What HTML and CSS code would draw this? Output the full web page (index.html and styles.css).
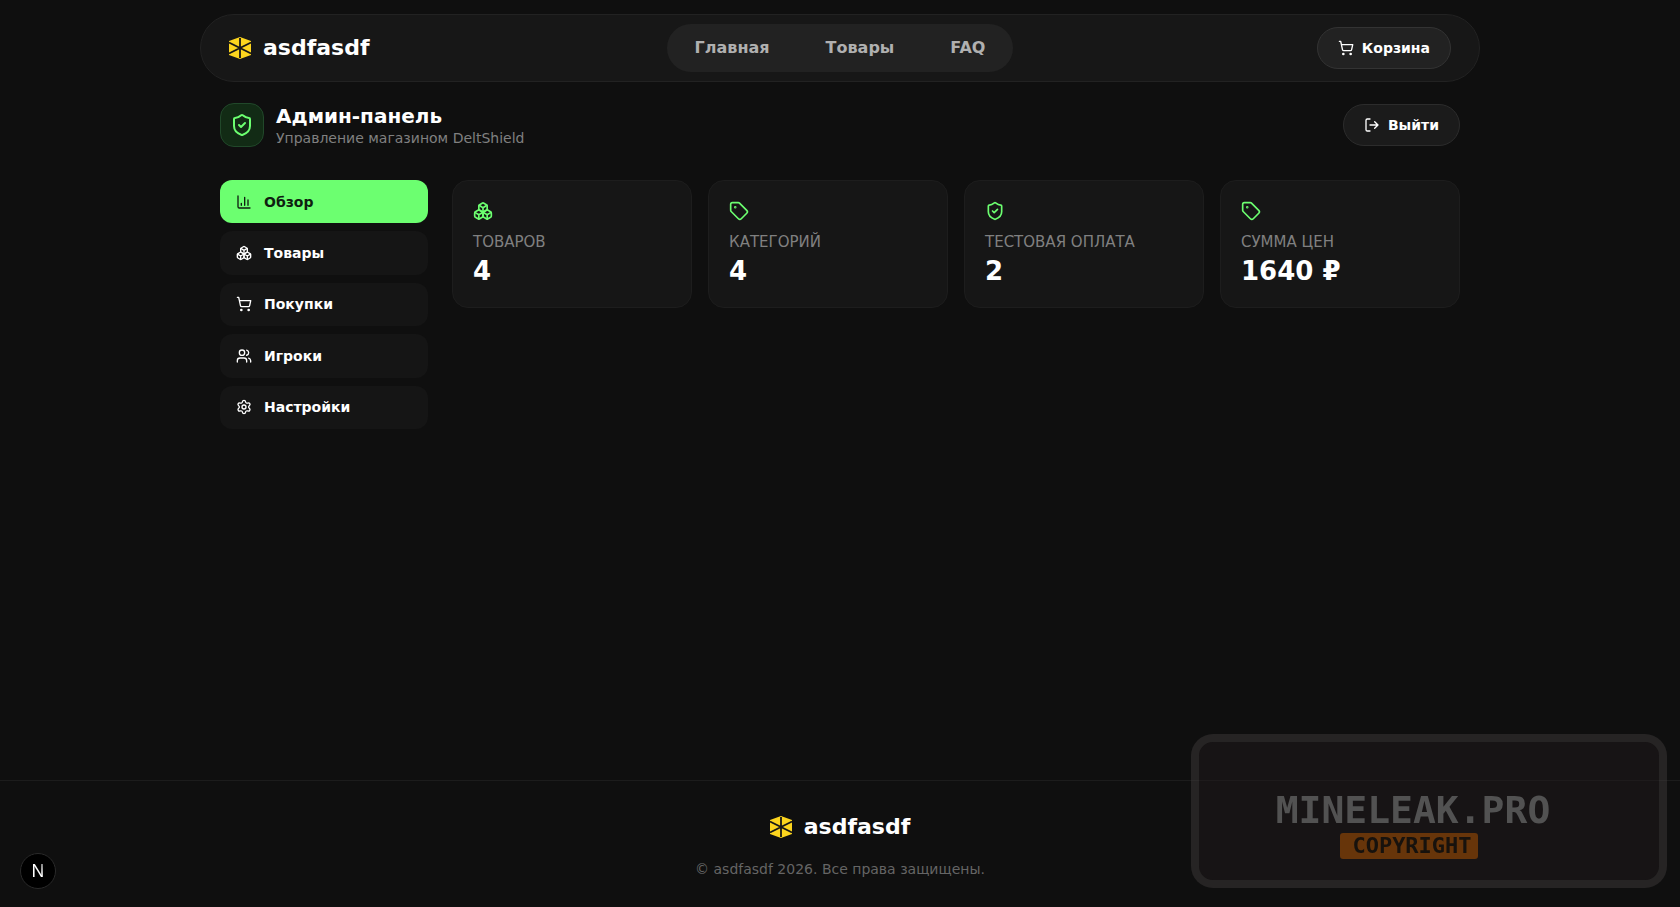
FILE: index.html
```html
<!DOCTYPE html>
<html lang="ru">
<head>
    <meta charset="UTF-8">
    <meta name="viewport" content="width=device-width, initial-scale=1.0">
    <title>asdfasdf</title>
    <link rel="stylesheet" href="styles.css">
</head>
<body>
    <!-- Shared icons -->
    <svg class="sprite" aria-hidden="true">
        <symbol id="icon-logo" viewBox="0 0 22 22">
            <path d="M11 0 22 4v14l-11 4-11-4V4z" fill="#fcd51e"/>
            <path d="M11 1v20M0 5.5l22 11M22 5.5l-22 11" stroke="#171717" stroke-width="1.8" fill="none"/>
        </symbol>
        <symbol id="icon-cart" viewBox="0 0 24 24">
            <circle cx="8" cy="21" r="1"/>
            <circle cx="19" cy="21" r="1"/>
            <path d="M2.05 2.05h2l2.66 12.42a2 2 0 0 0 2 1.58h9.78a2 2 0 0 0 1.95-1.57l1.65-7.43H5.12"/>
        </symbol>
        <symbol id="icon-shield" viewBox="0 0 24 24">
            <path d="M20 13c0 5-3.5 7.5-7.66 8.95a1 1 0 0 1-.67-.01C7.5 20.5 4 18 4 13V6a1 1 0 0 1 1-1c2 0 4.5-1.2 6.24-2.72a1.17 1.17 0 0 1 1.52 0C14.51 3.81 17 5 19 5a1 1 0 0 1 1 1z"/>
            <path d="m9 12 2 2 4-4"/>
        </symbol>
        <symbol id="icon-logout" viewBox="0 0 24 24">
            <path d="m16 17 5-5-5-5M21 12H9M9 21H5a2 2 0 0 1-2-2V5a2 2 0 0 1 2-2h4"/>
        </symbol>
        <symbol id="icon-chart" viewBox="0 0 24 24">
            <path d="M3 3v16a2 2 0 0 0 2 2h16M18 17V9M13 17V5M8 17v-3"/>
        </symbol>
        <symbol id="icon-boxes" viewBox="0 0 24 24">
            <path d="M2.97 12.92A2 2 0 0 0 2 14.63v3.24a2 2 0 0 0 .97 1.71l3 1.8a2 2 0 0 0 2.06 0L12 19v-5.5l-5-3-4.03 2.42Z"/>
            <path d="m7 16.5-4.74-2.85M7 16.5l5-3M7 16.5v5.17"/>
            <path d="M12 13.5V19l3.97 2.38a2 2 0 0 0 2.06 0l3-1.8a2 2 0 0 0 .97-1.71v-3.24a2 2 0 0 0-.97-1.71L17 10.5l-5 3Z"/>
            <path d="m17 16.5-5-3M17 16.5l4.74-2.85M17 16.5v5.17"/>
            <path d="M7.97 4.42A2 2 0 0 0 7 6.13v4.37l5 3 5-3V6.13a2 2 0 0 0-.97-1.71l-3-1.8a2 2 0 0 0-2.06 0l-3 1.8Z"/>
            <path d="M12 8 7.26 5.15M12 8l4.74-2.85M12 13.5V8"/>
        </symbol>
        <symbol id="icon-users" viewBox="0 0 24 24">
            <path d="M16 21v-2a4 4 0 0 0-4-4H6a4 4 0 0 0-4 4v2M16 3.13a4 4 0 0 1 0 7.75M22 21v-2a4 4 0 0 0-3-3.87"/>
            <circle cx="9" cy="7" r="4"/>
        </symbol>
        <symbol id="icon-settings" viewBox="0 0 24 24">
            <path d="M9.67 4.14a2.34 2.34 0 0 1 4.66 0 2.34 2.34 0 0 0 3.32 1.91 2.34 2.34 0 0 1 2.33 4.04 2.34 2.34 0 0 0 0 3.83 2.34 2.34 0 0 1-2.33 4.03 2.34 2.34 0 0 0-3.32 1.92 2.34 2.34 0 0 1-4.66 0 2.34 2.34 0 0 0-3.32-1.92 2.34 2.34 0 0 1-2.33-4.03 2.34 2.34 0 0 0 0-3.83 2.34 2.34 0 0 1 2.33-4.04 2.34 2.34 0 0 0 3.32-1.91"/>
            <circle cx="12" cy="12" r="3"/>
        </symbol>
        <symbol id="icon-tag" viewBox="0 0 24 24">
            <path d="M12.59 2.59A2 2 0 0 0 11.17 2H4a2 2 0 0 0-2 2v7.17a2 2 0 0 0 .59 1.42l8.7 8.7a2.43 2.43 0 0 0 3.42 0l6.58-6.58a2.43 2.43 0 0 0 0-3.42z"/>
            <circle cx="7.5" cy="7.5" r=".5" fill="currentColor"/>
        </symbol>
    </svg>

    <header class="header">
        <a href="#" class="logo">
            <svg class="logo-icon"><use href="#icon-logo"/></svg>
            <span>asdfasdf</span>
        </a>
        <nav class="nav">
            <a href="#">Главная</a>
            <a href="#">Товары</a>
            <a href="#">FAQ</a>
        </nav>
        <button type="button" class="btn btn-cart">
            <svg class="icon"><use href="#icon-cart"/></svg>
            Корзина
        </button>
    </header>

    <main class="admin">
        <div class="admin-head">
            <div class="admin-badge">
                <svg class="icon"><use href="#icon-shield"/></svg>
            </div>
            <div class="admin-title">
                <h1>Админ-панель</h1>
                <p>Управление магазином DeltShield</p>
            </div>
            <button type="button" class="btn">
                <svg class="icon"><use href="#icon-logout"/></svg>
                Выйти
            </button>
        </div>

        <div class="admin-body">
            <aside class="sidebar">
                <button type="button" class="tab active"><svg class="icon"><use href="#icon-chart"/></svg>Обзор</button>
                <button type="button" class="tab"><svg class="icon"><use href="#icon-boxes"/></svg>Товары</button>
                <button type="button" class="tab"><svg class="icon"><use href="#icon-cart"/></svg>Покупки</button>
                <button type="button" class="tab"><svg class="icon"><use href="#icon-users"/></svg>Игроки</button>
                <button type="button" class="tab"><svg class="icon"><use href="#icon-settings"/></svg>Настройки</button>
            </aside>

            <section class="stats">
                <div class="stat">
                    <svg class="icon"><use href="#icon-boxes"/></svg>
                    <div class="stat-label">Товаров</div>
                    <div class="stat-value">4</div>
                </div>
                <div class="stat">
                    <svg class="icon"><use href="#icon-tag"/></svg>
                    <div class="stat-label">Категорий</div>
                    <div class="stat-value">4</div>
                </div>
                <div class="stat">
                    <svg class="icon"><use href="#icon-shield"/></svg>
                    <div class="stat-label">Тестовая оплата</div>
                    <div class="stat-value">2</div>
                </div>
                <div class="stat">
                    <svg class="icon"><use href="#icon-tag"/></svg>
                    <div class="stat-label">Сумма цен</div>
                    <div class="stat-value">1640 ₽</div>
                </div>
            </section>
        </div>
    </main>

    <footer class="footer">
        <a href="#" class="logo">
            <svg class="logo-icon"><use href="#icon-logo"/></svg>
            <span>asdfasdf</span>
        </a>
        <p>© asdfasdf 2026. Все права защищены.</p>
    </footer>

    <button type="button" class="dev-button"><span>N</span></button>

    <div class="watermark">
        <div class="watermark-name">MINELEAK.PRO</div>
        <div class="watermark-tag">COPYRIGHT</div>
    </div>
</body>
</html>
```

FILE: styles.css
```css
* {
    box-sizing: border-box;
}

body {
    margin: 0;
    min-height: 100vh;
    display: flex;
    flex-direction: column;
    background-color: #0f0f0f;
    color: #fff;
    font-family: "DejaVu Sans", sans-serif;
    font-size: 14px;
}

h1,
p {
    margin: 0;
}

a {
    color: inherit;
    text-decoration: none;
}

button {
    font-family: inherit;
    color: inherit;
    cursor: pointer;
}

.sprite {
    position: absolute;
    width: 0;
    height: 0;
}

.icon {
    width: 16px;
    height: 16px;
    flex-shrink: 0;
    fill: none;
    stroke: currentColor;
    stroke-width: 2;
    stroke-linecap: round;
    stroke-linejoin: round;
}

/* Header */
.header {
    width: 100%;
    max-width: 1280px;
    min-height: 68px;
    margin: 14px auto 0;
    padding: 0 28px;
    display: grid;
    grid-template-columns: 1fr auto 1fr;
    align-items: center;
    background-color: #171717;
    border: 1px solid #222;
    border-radius: 34px;
}

.logo {
    display: inline-flex;
    align-items: center;
    gap: 12px;
    font-size: 22px;
    line-height: 24px;
    font-weight: bold;
}

.logo-icon {
    width: 22px;
    height: 22px;
}

.nav {
    display: flex;
    gap: 56px;
    padding: 12px 28px;
    background-color: #222;
    border-radius: 24px;
    color: #b0b0b0;
    font-size: 16px;
    line-height: 24px;
    font-weight: bold;
}

.btn {
    display: inline-flex;
    align-items: center;
    gap: 8px;
    padding: 10px 20px;
    background-color: #1b1b1b;
    border: 1px solid #2c2c2c;
    border-radius: 21px;
    font-size: 14px;
    line-height: 20px;
    font-weight: bold;
}

.btn-cart {
    justify-self: end;
    background-color: #222;
    border-color: #333;
}

/* Admin panel */
.admin {
    width: 100%;
    max-width: 1280px;
    margin: 0 auto;
    padding: 21px 20px 40px;
    flex: 1;
}

.admin-head {
    display: flex;
    align-items: center;
    gap: 12px;
    margin-bottom: 33px;
}

.admin-badge {
    width: 44px;
    height: 44px;
    display: flex;
    align-items: center;
    justify-content: center;
    background-color: #122b15;
    border: 1px solid #21482a;
    border-radius: 14px;
    color: #6cff70;
}

.admin-badge .icon {
    width: 24px;
    height: 24px;
}

.admin-title {
    flex: 1;
}

.admin-title h1 {
    font-size: 20px;
    line-height: 26px;
}

.admin-title p {
    color: #808080;
    line-height: 18px;
}

.admin-body {
    display: grid;
    grid-template-columns: 208px 1fr;
    gap: 24px;
    align-items: start;
}

.sidebar {
    display: grid;
    gap: 8px;
    min-height: 249px;
}

.tab {
    display: flex;
    align-items: center;
    gap: 12px;
    padding: 0 16px;
    background-color: #151515;
    border: none;
    border-radius: 12px;
    font-size: 14px;
    font-weight: bold;
    text-align: left;
}

.tab.active {
    background-color: #6cff70;
    color: #0f1f10;
}

.stats {
    display: grid;
    grid-template-columns: repeat(4, 1fr);
    gap: 16px;
}

.stat {
    padding: 20px;
    min-height: 128px;
    background-color: #161616;
    border: 1px solid #1d1d1d;
    border-radius: 16px;
}

.stat .icon {
    display: block;
    width: 20px;
    height: 20px;
    color: #6cff70;
}

.stat-label {
    margin-top: 11px;
    color: #808080;
    font-size: 15px;
    line-height: 20px;
    text-transform: uppercase;
}

.stat-value {
    margin-top: 3px;
    font-size: 26px;
    line-height: 32px;
    font-weight: bold;
}

/* Footer */
.footer {
    min-height: 127px;
    padding: 34px 20px 28px;
    display: flex;
    flex-direction: column;
    align-items: center;
    gap: 20px;
    border-top: 1px solid #1c1c1c;
}

.footer p {
    color: #656565;
    line-height: 20px;
}

.dev-button {
    position: fixed;
    left: 20px;
    bottom: 18px;
    width: 36px;
    height: 36px;
    padding: 0;
    background-color: #000;
    border: 1px solid #2a2a2a;
    border-radius: 50%;
    font-family: Inter, sans-serif;
    font-size: 17px;
}

.dev-button span {
    background: linear-gradient(to top right, #fff 60%, #777);
    background-clip: text;
    color: transparent;
}

/* Watermark over the page corner */
.watermark {
    position: fixed;
    right: 13px;
    bottom: 19px;
    width: 476px;
    height: 154px;
    padding: 46px 32px 0 0;
    display: flex;
    flex-direction: column;
    align-items: center;
    background-color: rgba(32, 26, 27, 0.5);
    background-clip: padding-box;
    border: 8px solid rgba(62, 58, 58, 0.5);
    border-radius: 22px;
    font-family: "DejaVu Sans Mono", monospace;
    font-weight: bold;
    pointer-events: none;
}

.watermark-name {
    color: #525252;
    font-size: 38px;
    line-height: 45px;
}

.watermark-tag {
    margin-right: 8px;
    padding: 0 6px 0 12px;
    background-color: #67350a;
    border-radius: 3px;
    color: #17120d;
    font-size: 22px;
    line-height: 26px;
}
```
